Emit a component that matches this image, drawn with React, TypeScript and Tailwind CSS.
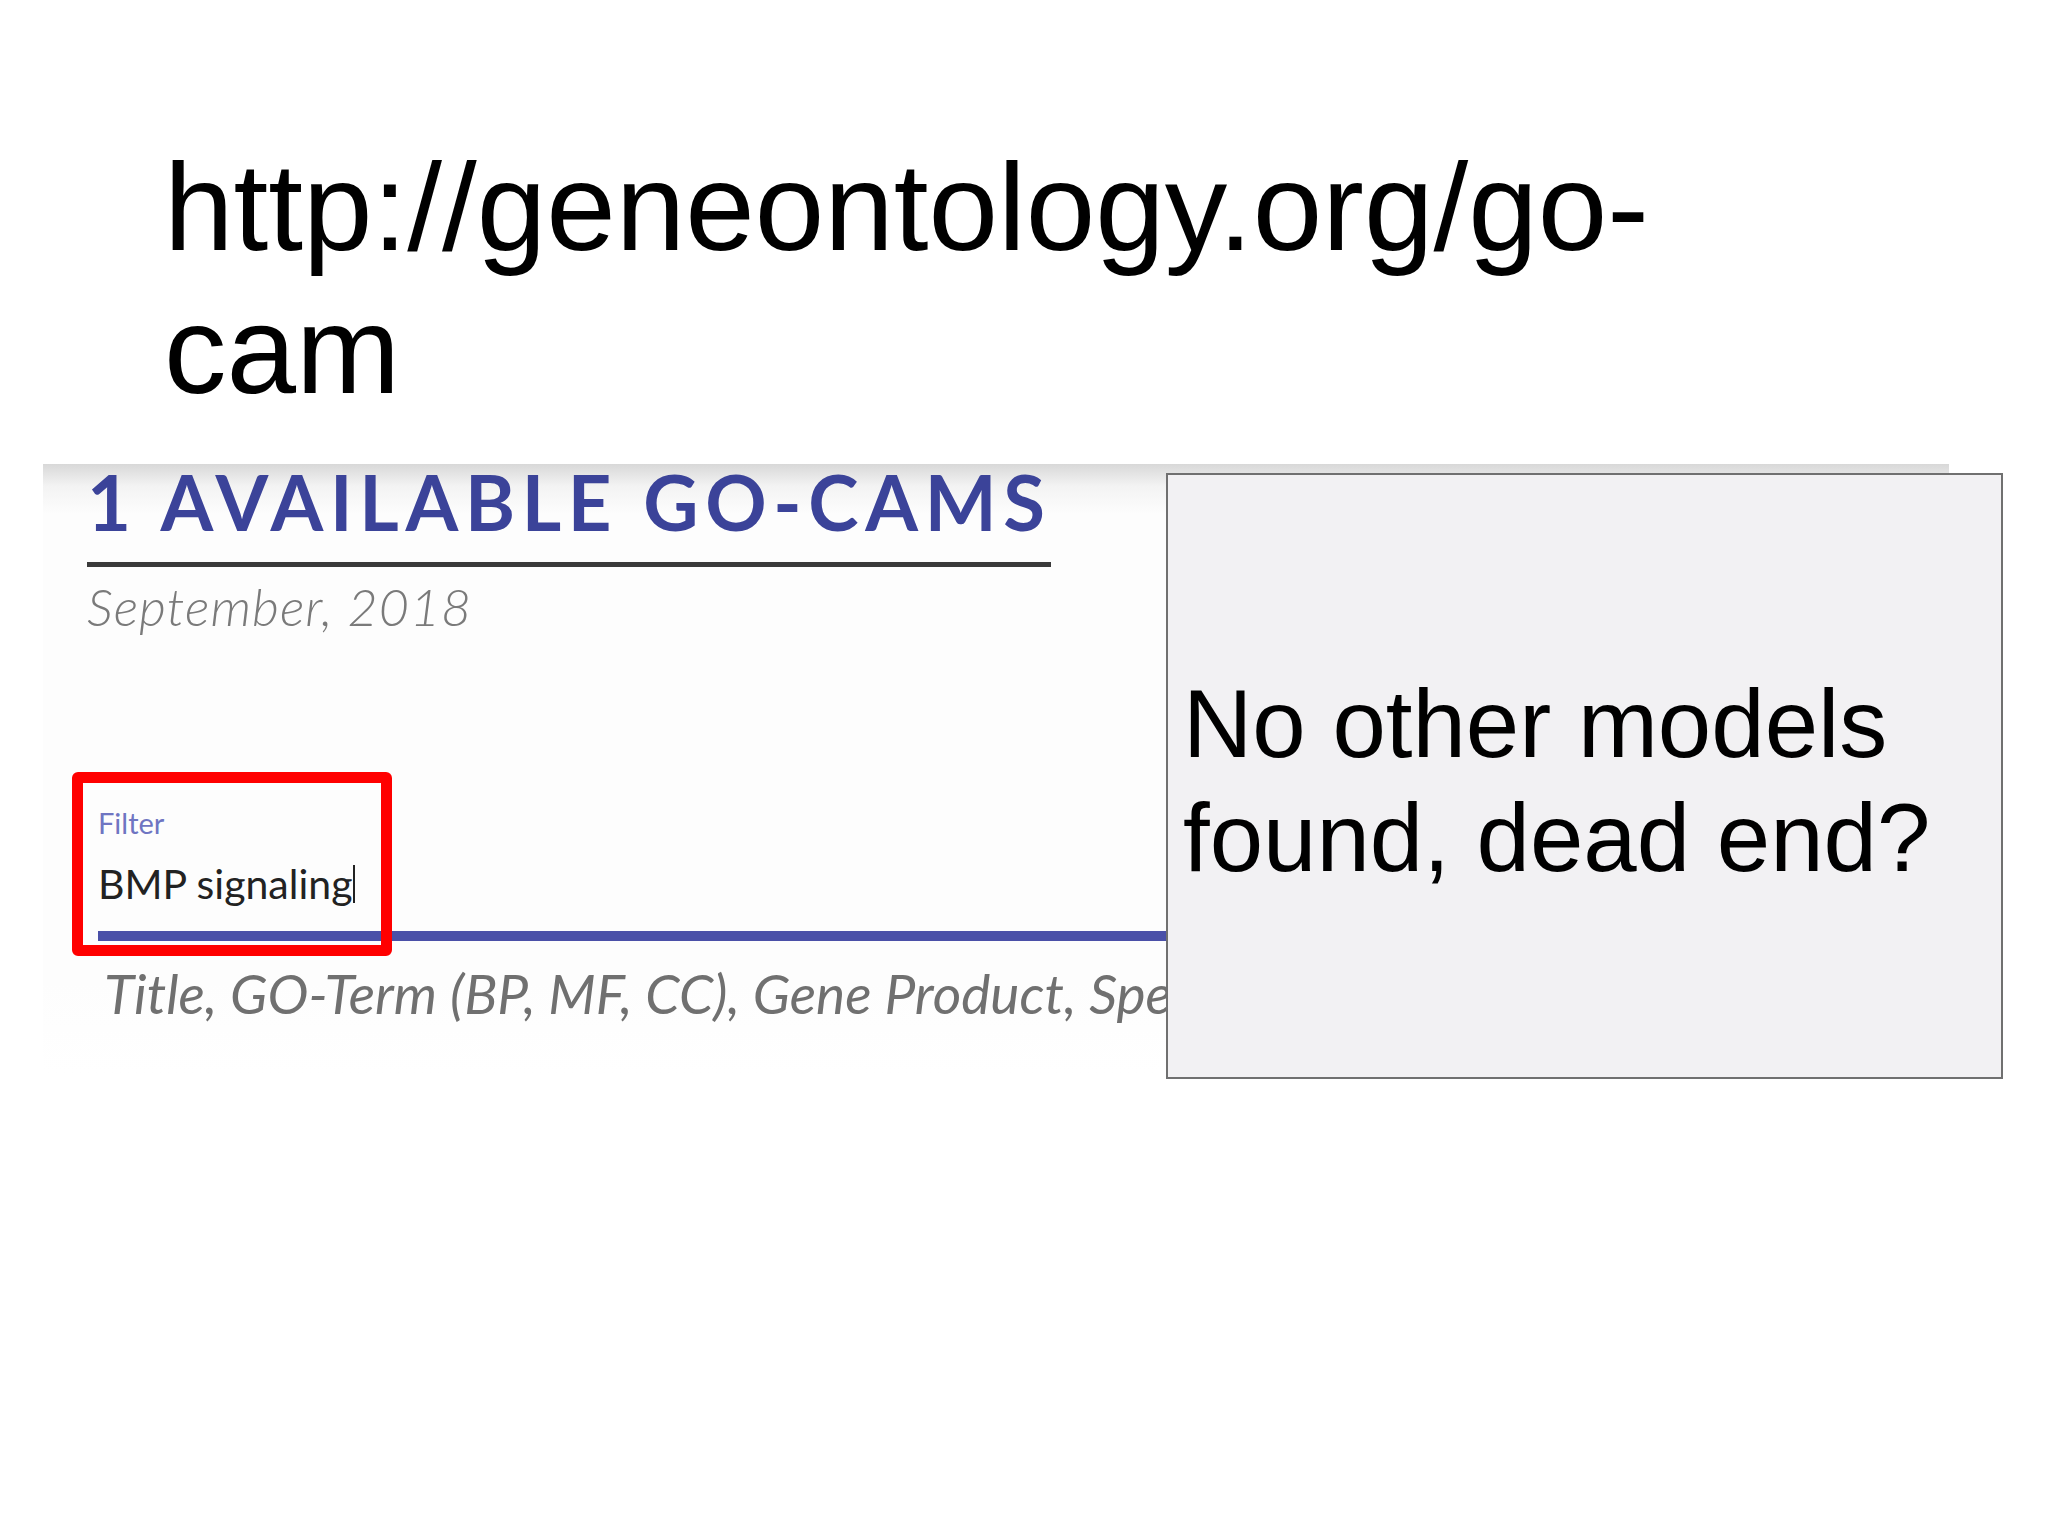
import React from 'react';

const App: React.FC = () => {
  return (
    <div className="relative w-[2048px] h-[1536px] bg-white overflow-hidden">
      {/* Slide title */}
      <div className="pt-[135px] pl-[164px] font-['Liberation_Sans',Arial,sans-serif] text-[125px] leading-[143px] text-black">
        http://geneontology.org/go-
        <br />
        cam
      </div>

      {/* Embedded screenshot of the GO-CAM page */}
      <div className="relative ml-[43px] mt-[43px] w-[1906px] h-[610px] pl-[44px] bg-[linear-gradient(to_bottom,#d8d8d8_0px,#f3f3f3_22px,#fdfdfd_50px,#fdfdfd_85%,#ffffff_100%)] font-['Lato','Open_Sans',sans-serif]">
        <h2 className="text-[76px] leading-[76px] font-bold tracking-[0.088em] text-[#3b4399] whitespace-nowrap">
          1 AVAILABLE GO-CAMS
        </h2>
        <div className="mt-[22px] w-[964px] h-[5px] bg-[#3a3a3a]" />
        <p className="mt-[9px] text-[52px] leading-[60px] font-light italic tracking-[0.02em] text-[#7a7a7a]">
          September, 2018
        </p>

        <div className="mt-[169px] ml-[11px] w-[1800px]">
          <div className="text-[29px] leading-[35px] text-[#6f75c2]">Filter</div>
          <div className="mt-[20px] flex items-center text-[41px] leading-[48px] text-[#222222]">
            <span>BMP signaling</span>
            <span className="ml-[1px] w-[2px] h-[38px] bg-[#222222]" />
          </div>
          <div className="mt-[23px] h-[10px] bg-[#4a50a8]" />
          <div className="mt-[20px] ml-[6px] text-[55px] leading-[64px] italic text-[#707070] whitespace-nowrap">
            Title, GO-Term (BP, MF, CC), Gene Product, Species
          </div>
        </div>

        {/* Red annotation around the filter input */}
        <div className="absolute left-[29px] top-[308px] w-[320px] h-[184px] border-[11px] border-[#ff0000] rounded-[6px]" />
      </div>

      {/* Call-out box */}
      <div className="absolute left-[1166px] top-[473px] w-[837px] h-[606px] border-2 border-[#707070] bg-[#f2f1f3] pt-[192px] pl-[15px] font-['Liberation_Sans',Arial,sans-serif] text-[96px] leading-[114px] text-black">
        No other models
        <br />
        found, dead end?
      </div>
    </div>
  );
};

export default App;
